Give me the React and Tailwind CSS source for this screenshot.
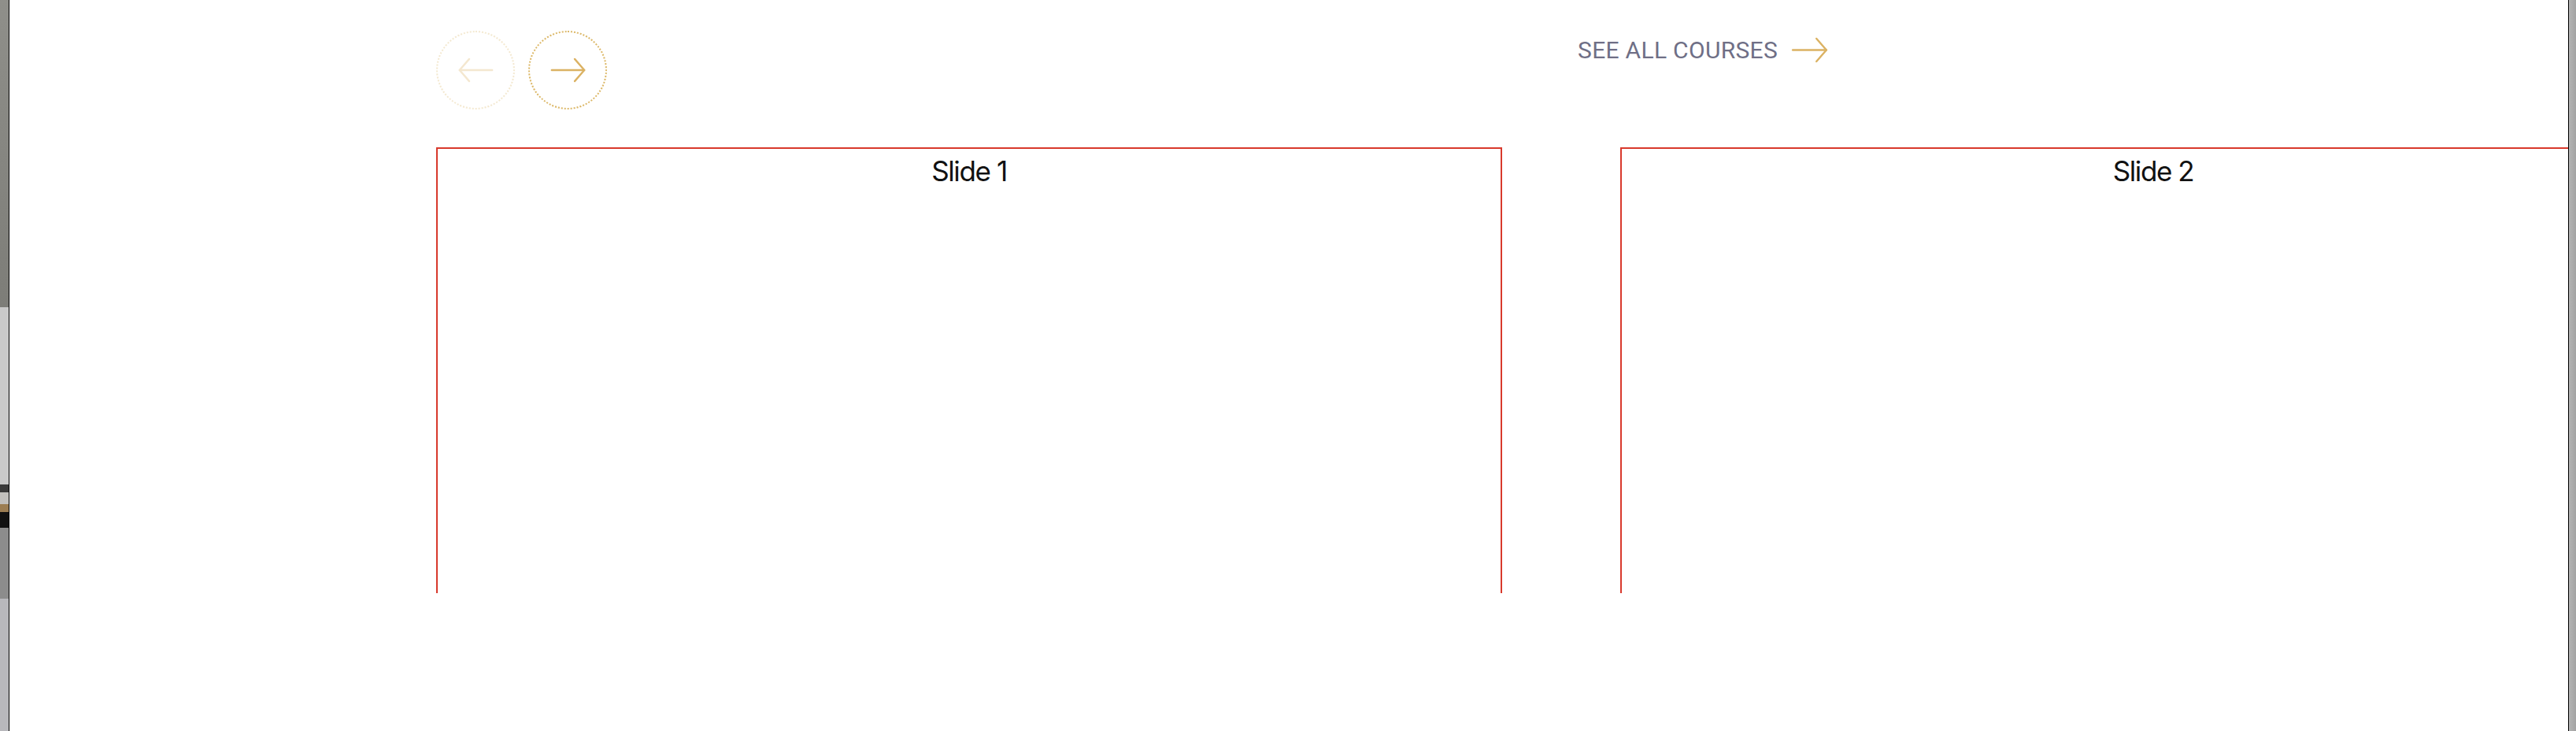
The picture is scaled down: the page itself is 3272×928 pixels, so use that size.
import React from 'react';

const Arrow = ({ dir = 'right', className = '' }) => (
    <svg
        viewBox="0 0 48 34"
        className={className}
        fill="none"
        stroke="currentColor"
        strokeWidth="2.5"
        strokeLinecap="round"
        strokeLinejoin="round"
        style={dir === 'left' ? { transform: 'scaleX(-1)' } : undefined}
    >
        <path d="M2 17 H46" />
        <path d="M33 2 L46 17 L33 32" />
    </svg>
);

const NavButton = ({ dir, disabled }) => (
    <button
        className={`flex h-[100px] w-[100px] items-center justify-center rounded-full border-2 border-dotted border-[#dcb868] text-[#dbb263] ${
            disabled ? 'opacity-30' : ''
        }`}
    >
        <Arrow dir={dir} className="h-[32px] w-[47px]" />
    </button>
);

const Slide = ({ label }) => (
    <div className="h-[720px] w-[1354px] shrink-0 border-2 border-[#d8392c] pt-[6px] text-center">
        <span className="font-['Inter',sans-serif] text-[35px] leading-[44px] tracking-[-0.04em] text-[#111]">{label}</span>
    </div>
);

const App = () => {
    return (
        <div className="flex h-[928px] w-full overflow-hidden bg-white">
            {/* left edge strip (background photo peeking through) */}
            <div className="flex w-[11px] shrink-0 flex-col">
                <div className="h-[390px] bg-gradient-to-b from-[#8f8f8a] to-[#7d7d78]" />
                <div className="h-[225px] bg-[#c9c9c9]" />
                <div className="h-[10px] bg-[#3a3a3a]" />
                <div className="h-[15px] bg-[#c2c0bd]" />
                <div className="h-[10px] bg-[#9c7d52]" />
                <div className="h-[20px] bg-[#111]" />
                <div className="h-[90px] bg-[#8c8c8c]" />
                <div className="flex-1 bg-[#b8b8bc]" />
            </div>
            <div className="w-px shrink-0 bg-black" />

            <main className="flex-1 overflow-hidden pl-[542px] pt-[39px]">
                <div className="flex w-[1768px] items-start justify-between">
                    <div className="flex gap-[17px]">
                        <NavButton dir="left" disabled />
                        <NavButton dir="right" />
                    </div>
                    <a href="#" className="flex h-[48px] items-center gap-[17px]">
                        <span className="font-['Roboto',sans-serif] text-[30px] tracking-[0.01em] text-[#6f6f86]">
                            SEE ALL COURSES
                        </span>
                        <Arrow className="h-[33px] w-[47px] text-[#dbb263]" />
                    </a>
                </div>

                <div className="mt-[48px] flex h-[566px] gap-[150px] overflow-hidden">
                    <Slide label="Slide 1" />
                    <Slide label="Slide 2" />
                </div>
            </main>

            {/* right edge strip */}
            <div className="w-px shrink-0 bg-black" />
            <div className="w-[9px] shrink-0 bg-gradient-to-r from-[#b4b4b4] to-[#a3a3a3]" />
        </div>
    );
};

export default App;
